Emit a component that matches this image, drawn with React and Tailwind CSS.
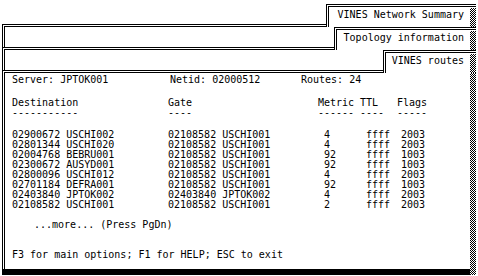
import React from 'react';

const checker =
  'bg-[image:repeating-conic-gradient(#000_0_25%,#fff_0_50%)] bg-[length:2px_2px]';

const routes = [
  ['02900672 USCHI002', '02108582 USCHI001', '4', 'ffff', '2003'],
  ['02801344 USCHI020', '02108582 USCHI001', '4', 'ffff', '2003'],
  ['02004768 BEBRU001', '02108582 USCHI001', '92', 'ffff', '1003'],
  ['02300672 AUSYD001', '02108582 USCHI001', '92', 'ffff', '1003'],
  ['02800096 USCHI012', '02108582 USCHI001', '4', 'ffff', '2003'],
  ['02701184 DEFRA001', '02108582 USCHI001', '92', 'ffff', '1003'],
  ['02403840 JPTOK002', '02403840 JPTOK002', '4', 'ffff', '2003'],
  ['02108582 USCHI001', '02108582 USCHI001', '2', 'ffff', '2003'],
];

const Tab = ({ label, width }) => (
  <div className="flex justify-end">
    <div
      className={`relative z-10 -mb-[3px] flex h-[23px] bg-white border-t-[3px] border-l-[3px] border-double border-black ${width}`}
    >
      <span className="flex-1 pt-[3px] pr-[6px] text-right whitespace-pre">{label}</span>
      <div className={`w-[6px] mt-[1px] ${checker}`} />
    </div>
  </div>
);

const Window = ({ label, tabWidth, top, children }) => (
  <div className={`absolute left-[2px] bottom-[1px] w-[474px] flex flex-col ${top}`}>
    <Tab label={label} width={tabWidth} />
    <div className="flex-1 flex flex-col bg-white border-t-[3px] border-l-[3px] border-double border-black">
      <div className="flex-1 flex">
        <div className="flex-1 flex flex-col pl-[7px]">{children}</div>
        <div className={`w-[6px] ${checker}`} />
      </div>
      <div className="-ml-[3px] flex h-[6px]">
        <div className="flex-1 bg-black" />
        <div className={`w-[6px] ${checker}`} />
      </div>
    </div>
  </div>
);

const Row = ({ cells, values }) => (
  <div className="flex h-[10px] whitespace-pre">
    <span className="w-[156px]">{cells[0]}</span>
    <span className="w-[150px]">{cells[1]}</span>
    <span className={values ? 'w-[42px] pl-[6px]' : 'w-[42px]'}>{cells[2]}</span>
    <span className={values ? 'w-[37px] pl-[6px]' : 'w-[37px]'}>{cells[3]}</span>
    <span className={values ? 'pl-[4px]' : ''}>{cells[4]}</span>
  </div>
);

export default function App() {
  return (
    <div className="relative w-[478px] h-[276px] overflow-hidden bg-white text-black text-[10px] leading-[10px] [font-family:'DejaVu_Sans_Mono',monospace]">
      <Window label="VINES Network Summary" tabWidth="w-[150px]" top="top-[4px]" />
      <Window label="Topology information" tabWidth="w-[142px]" top="top-[27px]" />
      <Window label="VINES routes" tabWidth="w-[93px]" top="top-[50px]">
        <div className="mt-[2px] flex h-[10px] whitespace-pre">
          <span className="w-[158px]">Server: JPTOK001</span>
          <span className="w-[131px]">Netid: 02000512</span>
          <span>Routes: 24</span>
        </div>
        <div className="mt-[13px] flex flex-col">
          <Row cells={['Destination', 'Gate', 'Metric', 'TTL', 'Flags']} />
          <Row cells={['-----------', '----', '------', '----', '-----']} />
        </div>
        <div className="mt-[12px] flex flex-col">
          {routes.map((r) => (
            <Row key={r[0]} cells={r} values />
          ))}
        </div>
        <div className="mt-[10px] h-[10px] pl-[22px] whitespace-pre">...more... (Press PgDn)</div>
        <div className="mt-[20px] h-[10px] whitespace-pre">F3 for main options; F1 for HELP; ESC to exit</div>
      </Window>
    </div>
  );
}
